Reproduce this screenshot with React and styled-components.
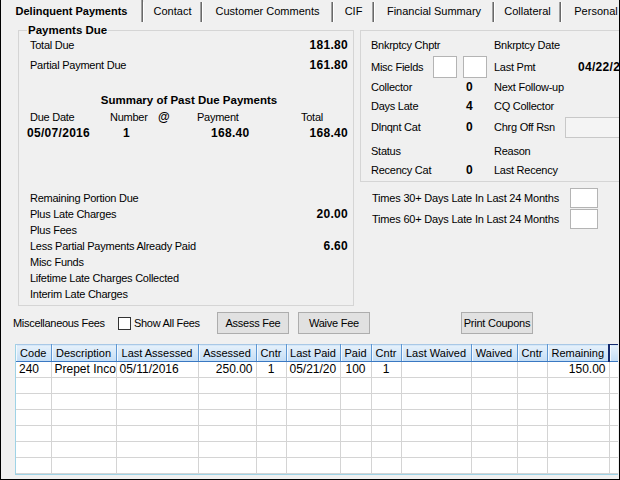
import React from "react";
import styled, { createGlobalStyle } from "styled-components";

const Global = createGlobalStyle`
  html, body { margin: 0; padding: 0; background: #f0f0f0; }
  body {
    font-family: "Liberation Sans", Arial, sans-serif;
    font-size: 11px;
    color: #000;
  }
`;

const Window = styled.div`
  width: 620px;
  height: 480px;
  box-sizing: border-box;
  border: 1px solid #000;
  border-top: none;
  background: #f0f0f0;
  overflow: hidden;
  display: flex;
  flex-direction: column;
`;

const TabStrip = styled.div`
  display: flex;
  height: 22px;
  flex-shrink: 0;
`;

const Tab = styled.div`
  width: ${p => p.$w}px;
  flex-shrink: 0;
  box-sizing: border-box;
  display: flex;
  align-items: center;
  justify-content: center;
  font-size: 11px;
  font-weight: ${p => (p.$active ? 700 : 400)};
  border-left: ${p => (p.$active ? "none" : "1px solid #fff")};
  border-right: 1px solid #696969;
  box-shadow: inset -1px 0 0 #a0a0a0;
  margin-top: ${p => (p.$active ? 0 : 2)}px;
  padding-bottom: ${p => (p.$active ? 0 : 2)}px;
  white-space: nowrap;
`;

const Body = styled.div`
  padding: 1px 0 0 11px;
  display: flex;
  flex-direction: column;
`;

const TopArea = styled.div`
  display: flex;
  align-items: flex-start;
  gap: 6px;
  margin-left: 6px;
`;

const Group = styled.fieldset`
  margin: ${p => p.$mt || 0}px 0 0 0;
  min-width: 0;
  box-sizing: border-box;
  border: 1px solid #d5d5d5;
  width: ${p => p.$w}px;
  padding: ${p => p.$pad};
  flex-shrink: 0;
`;

const Legend = styled.legend`
  font-weight: 700;
  font-size: 11.5px;
  line-height: 14px;
  padding: 0 1px;
  margin-left: -3px;
`;

const Line = styled.div`
  display: flex;
  align-items: center;
  justify-content: ${p => (p.$center ? "center" : "space-between")};
  height: 16px;
  margin-top: ${p => p.$mt || 0}px;
`;

const Label = styled.span`
  letter-spacing: -0.25px;
  white-space: nowrap;
`;

const Value = styled.span`
  font-weight: 700;
  font-size: 12px;
  letter-spacing: 0.3px;
  white-space: nowrap;
`;

const Title = styled.span`
  font-weight: 700;
  font-size: 11.5px;
  white-space: nowrap;
`;

const SumRow = styled.div`
  display: grid;
  grid-template-columns: 80px 45px 40px 100px 1fr;
  height: 16px;
  align-items: center;
  margin-top: ${p => p.$mt || 0}px;
`;

const Cell = styled.span`
  padding-left: ${p => p.$pl || 0}px;
  margin-left: ${p => p.$ml || 0}px;
  text-align: ${p => (p.$right ? "right" : "left")};
  font-weight: ${p => (p.$bold ? 700 : 400)};
  font-size: ${p => (p.$bold ? 12 : 11)}px;
  letter-spacing: ${p => (p.$bold ? "0.3px" : "-0.25px")};
  white-space: nowrap;
`;

const RightCol = styled.div`
  display: flex;
  flex-direction: column;
  flex-shrink: 0;
`;

const InfoGrid = styled.div`
  display: grid;
  grid-template-columns: 62px 61px 71px 1fr;
  grid-template-rows: 20px 23px 18px 20px 22px 25px 14px;
  align-items: center;
`;

const Boxes = styled.div`
  display: flex;
  gap: 6px;
`;

const Field = styled.div`
  width: ${p => p.$w}px;
  height: ${p => p.$h}px;
  box-sizing: border-box;
  background: #fff;
  border: 1px solid #b4b4b4;
`;

const WideField = styled(Field)`
  background: #f4f4f4;
  border-color: #c8c8c8;
`;

const TimesRow = styled.div`
  display: flex;
  align-items: center;
  height: 21px;
  padding-left: 12px;
  margin-top: ${p => p.$mt || 0}px;
`;

const TimesLabel = styled.span`
  width: 198px;
  letter-spacing: -0.2px;
  white-space: nowrap;
`;

const FeesBar = styled.div`
  display: flex;
  align-items: center;
  height: 22px;
  margin-top: 6px;
`;

const FeesLabel = styled.span`
  width: 105px;
  padding-left: 1px;
  letter-spacing: -0.3px;
  white-space: nowrap;
`;

const Check = styled.label`
  width: 99px;
  display: flex;
  align-items: center;
  gap: 3px;
  letter-spacing: -0.3px;
  white-space: nowrap;
`;

const CheckBox = styled.span`
  width: 13px;
  height: 13px;
  box-sizing: border-box;
  background: #fff;
  border: 1px solid #333;
`;

const Button = styled.button`
  width: 72px;
  height: 22px;
  margin-left: ${p => p.$ml || 0}px;
  box-sizing: border-box;
  background: #e1e1e1;
  border: 1px solid #adadad;
  font-family: inherit;
  font-size: 11px;
  letter-spacing: -0.25px;
  color: #000;
  padding: 0;
`;

const GridWrap = styled.div`
  margin: 10px 0 0 3px;
  width: 603px;
  height: 131px;
  overflow: hidden;
  border-left: 1px solid #9fd3e6;
  border-bottom: 1px solid #9fd3e6;
  box-sizing: border-box;
  background: #fff;
`;

const Table = styled.table`
  border-collapse: collapse;
  table-layout: fixed;
  width: 640px;
`;

const Th = styled.th`
  height: 16px;
  padding: 0;
  font-weight: 400;
  font-size: 11px;
  text-align: center;
  white-space: nowrap;
  overflow: hidden;
  background: linear-gradient(#e6f1fb, #c3ddf5);
  border-right: 1px solid #5e97d3;
  border-bottom: 1px solid #3a78c2;
  border-top: 1px solid #a9c8e6;
  box-shadow: inset 1px 0 0 #f4f9fe;
`;

const ThEdge = styled(Th)`
  border-left: 2px solid #142a6e;
  border-top: 1px solid #142a6e;
`;

const Td = styled.td`
  height: 15px;
  padding: 0 3px;
  font-size: 12px;
  line-height: 15px;
  white-space: nowrap;
  overflow: hidden;
  text-align: ${p => p.$align || "left"};
  border-right: 1px solid #d4d4d4;
  border-bottom: 1px solid #d4d4d4;
`;

const columns = [
  { name: "Code", w: 35, align: "left" },
  { name: "Description", w: 65, align: "left" },
  { name: "Last Assessed", w: 82, align: "left" },
  { name: "Assessed", w: 58, align: "right" },
  { name: "Cntr", w: 30, align: "center" },
  { name: "Last Paid", w: 54, align: "left" },
  { name: "Paid", w: 31, align: "center" },
  { name: "Cntr", w: 30, align: "center" },
  { name: "Last Waived", w: 70, align: "left" },
  { name: "Waived", w: 46, align: "right" },
  { name: "Cntr", w: 30, align: "center" },
  { name: "Remaining", w: 62, align: "right" },
];

const fees = [
  ["240", "Prepet Inco", "05/11/2016", "250.00", "1", "05/21/20", "100", "1", "", "", "", "150.00"],
];

const tabs = [
  { label: "Delinquent Payments", w: 142, active: true },
  { label: "Contact", w: 59 },
  { label: "Customer Comments", w: 131 },
  { label: "CIF", w: 41 },
  { label: "Financial Summary", w: 120 },
  { label: "Collateral", w: 67 },
  { label: "Personal", w: 70 },
];

const charges = [
  ["Remaining Portion Due", ""],
  ["Plus Late Charges", "20.00"],
  ["Plus Fees", ""],
  ["Less Partial Payments Already Paid", "6.60"],
  ["Misc Funds", ""],
  ["Lifetime Late Charges Collected", ""],
  ["Interim Late Charges", ""],
];

export default function App() {
  const rows = [...fees];
  while (rows.length < 8) rows.push(columns.map(() => ""));

  return (
    <Window>
      <Global />
      <TabStrip>
        {tabs.map(t => (
          <Tab key={t.label} $w={t.w} $active={t.active}>{t.label}</Tab>
        ))}
      </TabStrip>

      <Body>
        <TopArea>
          <Group $w={336} $pad="0 5px 3px 11px">
            <Legend>Payments Due</Legend>
            <Line>
              <Label>Total Due</Label>
              <Value>181.80</Value>
            </Line>
            <Line $mt={4}>
              <Label>Partial Payment Due</Label>
              <Value>161.80</Value>
            </Line>
            <Line $mt={19} $center>
              <Title>Summary of Past Due Payments</Title>
            </Line>
            <SumRow $mt={1}>
              <Cell>Due Date</Cell>
              <Cell>Number</Cell>
              <Cell $pl={3} $bold>@</Cell>
              <Cell $pl={2}>Payment</Cell>
              <Cell $pl={6}>Total</Cell>
            </SumRow>
            <SumRow>
              <Cell $bold $ml={-3}>05/07/2016</Cell>
              <Cell $bold $pl={13}>1</Cell>
              <Cell />
              <Cell $bold $pl={16}>168.40</Cell>
              <Cell $bold $right>168.40</Cell>
            </SumRow>
            {charges.map(([label, value], i) => (
              <Line key={label} $mt={i === 0 ? 49 : 0}>
                <Label>{label}</Label>
                <Value>{value}</Value>
              </Line>
            ))}
          </Group>

          <RightCol>
            <Group $w={270} $mt={7} $pad="4px 0 4px 10px">
              <InfoGrid>
                <Label>Bnkrptcy Chptr</Label>
                <span />
                <Label>Bnkrptcy Date</Label>
                <span />

                <Label>Misc Fields</Label>
                <Boxes>
                  <Field $w={24} $h={22} />
                  <Field $w={24} $h={22} />
                </Boxes>
                <Label>Last Pmt</Label>
                <Cell $bold $pl={13}>04/22/2016</Cell>

                <Label>Collector</Label>
                <Cell $bold $pl={33}>0</Cell>
                <Label>Next Follow-up</Label>
                <span />

                <Label>Days Late</Label>
                <Cell $bold $pl={33}>4</Cell>
                <Label>CQ Collector</Label>
                <span />

                <Label>Dlnqnt Cat</Label>
                <Cell $bold $pl={33}>0</Cell>
                <Label>Chrg Off Rsn</Label>
                <WideField $w={100} $h={21} />

                <Label>Status</Label>
                <span />
                <Label>Reason</Label>
                <span />

                <Label>Recency Cat</Label>
                <Cell $bold $pl={33}>0</Cell>
                <Label>Last Recency</Label>
                <span />
              </InfoGrid>
            </Group>
            <TimesRow $mt={5}>
              <TimesLabel>Times 30+ Days Late In Last 24 Months</TimesLabel>
              <Field $w={28} $h={20} />
            </TimesRow>
            <TimesRow>
              <TimesLabel>Times 60+ Days Late In Last 24 Months</TimesLabel>
              <Field $w={28} $h={20} />
            </TimesRow>
          </RightCol>
        </TopArea>

        <FeesBar>
          <FeesLabel>Miscellaneous Fees</FeesLabel>
          <Check>
            <CheckBox />
            Show All Fees
          </Check>
          <Button>Assess Fee</Button>
          <Button $ml={9}>Waive Fee</Button>
          <Button $ml={91}>Print Coupons</Button>
        </FeesBar>

        <GridWrap>
          <Table>
            <colgroup>
              {columns.map((c, i) => <col key={i} style={{ width: c.w }} />)}
              <col style={{ width: 47 }} />
            </colgroup>
            <thead>
              <tr>
                {columns.map((c, i) => <Th key={i}>{c.name}</Th>)}
                <ThEdge />
              </tr>
            </thead>
            <tbody>
              {rows.map((r, ri) => (
                <tr key={ri}>
                  {r.map((v, ci) => (
                    <Td key={ci} $align={columns[ci].align}>{v}</Td>
                  ))}
                  <Td />
                </tr>
              ))}
            </tbody>
          </Table>
        </GridWrap>
      </Body>
    </Window>
  );
}
